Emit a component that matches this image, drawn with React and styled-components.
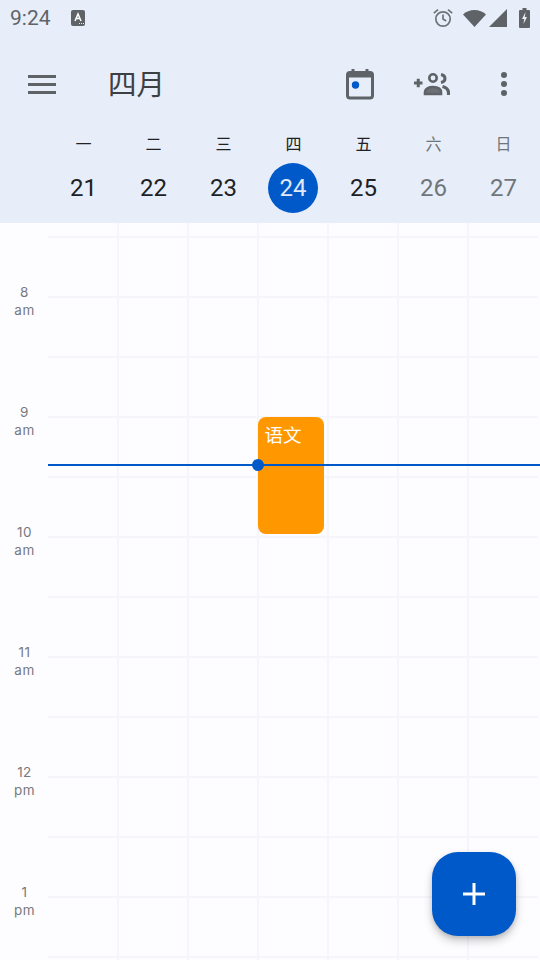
import React from "react";
import styled, { createGlobalStyle } from "styled-components";

const Global = createGlobalStyle`
  html, body { margin: 0; padding: 0; background: #fdfcff; }
  * { box-sizing: border-box; }
  body { font-family: Roboto, "Noto Sans CJK SC", sans-serif; }
`;

const Page = styled.div`
  width: 540px;
  height: 960px;
  position: relative;
  overflow: hidden;
  display: flex;
  flex-direction: column;
  background: #fdfcff;
`;
const Header = styled.header`
  height: 223px;
  flex: none;
  background: #e7eef9;
  display: flex;
  flex-direction: column;
`;
const StatusBar = styled.div`
  height: 36px;
  flex: none;
  display: flex;
  align-items: center;
  padding: 0 10px;
  color: #5f6368;
`;
const Clock = styled.span`
  font-size: 21px;
  width: 61px;
`;
const StatusRight = styled.div`
  margin-left: auto;
  display: flex;
  align-items: center;
`;
const AppBar = styled.div`
  height: 96px;
  flex: none;
  display: flex;
  align-items: center;
  padding-left: 28px;
`;
const Title = styled.h1`
  margin: -2px 0 0 52px;
  font: 400 28.500px/36px "Noto Sans CJK SC", sans-serif;
  color: #3c4043;
`;
const Actions = styled.div`
  margin-left: auto;
  display: flex;
`;
const Action = styled.div`
  width: 72px;
  height: 48px;
  display: flex;
  align-items: center;
  justify-content: center;
`;
const WeekHead = styled.div`
  display: grid;
  grid-template-columns: repeat(7, 70px);
  margin-left: 48px;
`;
const DayHead = styled.div`
  display: flex;
  flex-direction: column;
  align-items: center;
`;
const DayName = styled.div`
  height: 22px;
  padding-left: 1px;
  font: 400 16px/22px "Noto Sans CJK SC", sans-serif;
  color: ${p => (p.$muted ? "#70757a" : "#202124")};
`;
const DayNum = styled.div`
  margin-top: 9px;
  width: 50px;
  height: 50px;
  border-radius: 50%;
  display: flex;
  align-items: center;
  justify-content: center;
  font-size: 24px;
  padding-left: ${p => (p.$today ? 0 : 1)}px;
  background: ${p => (p.$today ? "#0059c8" : "transparent")};
  color: ${p => (p.$today ? "#dfe9f8" : p.$muted ? "#70757a" : "#202124")};
`;
const Body = styled.main`
  position: relative;
  flex: 1;
  display: flex;
  overflow: hidden;
`;
const Rail = styled.div`
  width: 48px;
  flex: none;
  padding-top: 60px;
  display: flex;
  flex-direction: column;
`;
const HourLabel = styled.div`
  height: 120px;
  flex: none;
  text-align: center;
  font: 400 13.500px/18px Inter, sans-serif;
  letter-spacing: 0.5px;
  color: #78797d;
  padding-left: 1px;
`;
const Column = styled.div`
  width: 70px;
  flex: none;
  position: relative;
  display: flex;
  flex-direction: column;
  &::before {
    content: "";
    display: ${p => (p.$first ? "none" : "block")};
    position: absolute;
    left: -1px;
    top: 0;
    bottom: 0;
    width: 2px;
    background: #f6f5fa;
  }
`;
const Slot = styled.div`
  flex: none;
  height: ${p => (p.$first ? "15px" : "60px")};
  border-bottom: 2px solid #f6f5fa;
`;
const Event = styled.div`
  position: absolute;
  left: 0;
  top: 194px;
  width: 66px;
  height: 117px;
  border-radius: 8px;
  background: #ff9800;
  color: #fff;
  padding: 4px 7px 0 6.500px;
  font: 400 18.500px/26px "Noto Sans CJK SC", sans-serif;
`;
const NowLine = styled.div`
  position: absolute;
  left: 48px;
  right: 0;
  top: 241px;
  height: 2px;
  background: #0059c8;
`;
const NowDot = styled.div`
  position: absolute;
  left: 204px;
  top: -5px;
  width: 12px;
  height: 12px;
  border-radius: 50%;
  background: #0059c8;
`;
const Fab = styled.button`
  position: absolute;
  left: 432px;
  top: 852px;
  width: 84px;
  height: 84px;
  border: 0;
  border-radius: 26px;
  background: #0059c8;
  box-shadow: 0 5px 10px rgba(0,0,0,.2), 0 2px 4px rgba(0,0,0,.12);
  display: flex;
  align-items: center;
  justify-content: center;
  padding: 0;
`;
const Icon = styled.svg`
  display: block;
  flex: none;
  margin-left: ${p => p.$ml || 0}px;
`;
const Burger = styled.div`
  width: 28px;
  height: 19px;
  display: flex;
  flex-direction: column;
  justify-content: space-between;
  flex: none;
  span { display: block; height: 3px; background: #5f6368; }
`;

const hours = [["8","am"],["9","am"],["10","am"],["11","am"],["12","pm"],["1","pm"]];
const days = [["一","21"],["二","22"],["三","23"],["四","24"],["五","25"],["六","26",1],["日","27",1]];
const slots = Array.from({ length: 13 }, (_, i) => i);

export default function App() {
  return (
    <Page>
      <Global />
      <Header>
        <StatusBar>
          <Clock>9:24</Clock>
          <Icon width="14" height="16" viewBox="0 0 14 16">
            <rect width="14" height="16" rx="2" fill="#5f6368" />
            <path d="M4 11 7 4l3 7M5.200 8.600h3.600" fill="none" stroke="#fff" strokeWidth="1.500" />
            <path d="M8 13.500h1M10 13.500h1M12 13.500h1" stroke="#e8e8e8" strokeWidth="1" />
          </Icon>
          <StatusRight>
            <Icon width="22" height="22" viewBox="0 0 22 22" fill="none" stroke="#6f7378" strokeWidth="1.700">
              <circle cx="11" cy="12" r="7.200" />
              <path d="M11 7.500V12l3.200 2M1.800 6.200 6 2.600M20.200 6.200 16 2.600" />
            </Icon>
            <Icon $ml="9" width="23" height="18" viewBox="0 0 23 18">
              <path d="M0 5.500C3 2.500 7 1 11.500 1S20 2.500 23 5.500L11.500 18Z" fill="#5f6368" />
            </Icon>
            <Icon $ml="3" width="18" height="18" viewBox="0 0 18 18">
              <path d="M18 0V18H0Z" fill="#5f6368" />
            </Icon>
            <Icon $ml="12" width="11" height="20" viewBox="0 0 11 20">
              <path d="M3.500 0h4v2H10a1 1 0 0 1 1 1v16a1 1 0 0 1-1 1H1a1 1 0 0 1-1-1V3a1 1 0 0 1 1-1h2.500Z" fill="#5f6368" />
              <path d="M6.500 4 3 11h2.200L4.500 16 8 9H5.800Z" fill="#e7eef9" />
            </Icon>
          </StatusRight>
        </StatusBar>
        <AppBar>
          <Burger><span /><span /><span /></Burger>
          <Title>四月</Title>
          <Actions>
            <Action>
              <Icon width="28" height="32" viewBox="0 0 28 32">
                <rect x="1.500" y="4.500" width="25" height="25.500" rx="2.500" fill="none" stroke="#5f6368" strokeWidth="3" />
                <rect x="1.500" y="4.500" width="25" height="5" fill="#5f6368" />
                <path d="M7 1v5M21 1v5" stroke="#5f6368" strokeWidth="3" />
                <circle cx="9.500" cy="17" r="3.700" fill="#0059c8" />
              </Icon>
            </Action>
            <Action>
              <Icon width="36" height="24" viewBox="0 0 36 24" fill="none" stroke="#5f6368">
                <path d="M0 11h8.500M4.250 6.750v8.500" strokeWidth="3" />
                <circle cx="19" cy="6" r="3.700" strokeWidth="2.600" />
                <path d="M11 22v-1.500c0-4 4-5.500 8-5.500s8 1.500 8 5.500V22Z" fill="#6c7077" strokeWidth="2.600" />
                <path d="M27 2.500c2.700.5 4 2 4 4s-1.300 3.500-4 4" strokeWidth="3" />
                <path d="M28.500 14.500c4 1 6 3.500 6 6.500v2" strokeWidth="3.200" />
              </Icon>
            </Action>
            <Action>
              <Icon width="6" height="24" viewBox="0 0 6 24" fill="#5f6368">
                <circle cx="3" cy="3" r="3" />
                <circle cx="3" cy="12" r="3" />
                <circle cx="3" cy="21" r="3" />
              </Icon>
            </Action>
          </Actions>
        </AppBar>
        <WeekHead>
          {days.map(([n, d, m]) => (
            <DayHead key={d}>
              <DayName $muted={m}>{n}</DayName>
              <DayNum $muted={m} $today={d === "24"}>{d}</DayNum>
            </DayHead>
          ))}
        </WeekHead>
      </Header>
      <Body>
        <Rail>
          {hours.map(([h, p]) => (
            <HourLabel key={h}>{h}<br />{p}</HourLabel>
          ))}
        </Rail>
        {days.map(([n, d], i) => (
          <Column key={d} $first={i === 0}>
            {slots.map(s => <Slot key={s} $first={s === 0} />)}
            {d === "24" && <Event>语文</Event>}
          </Column>
        ))}
        <NowLine><NowDot /></NowLine>
      </Body>
      <Fab aria-label="add">
        <Icon width="22" height="22" viewBox="0 0 22 22">
          <path d="M11 0v22M0 11h22" stroke="#fff" strokeWidth="3" />
        </Icon>
      </Fab>
    </Page>
  );
}
